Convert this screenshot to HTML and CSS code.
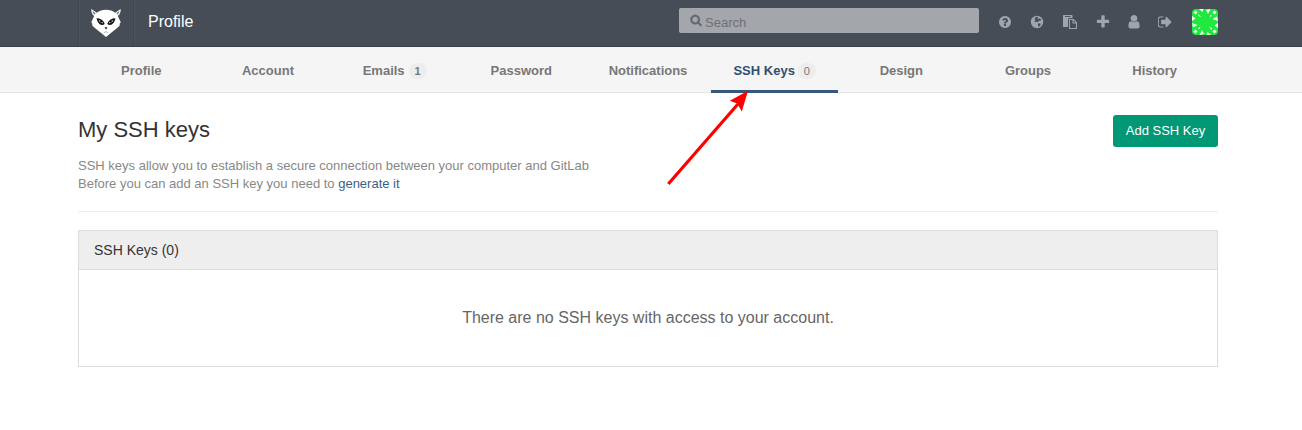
FILE: index.html
```html
<!DOCTYPE html>
<html lang="en">
<head>
<meta charset="utf-8">
<title>SSH Keys · Profile</title>
<link rel="stylesheet" href="styles.css">
</head>
<body>
<header class="topbar">
  <div class="container topbar-inner">
    <a class="logo">
      <svg width="30" height="29" viewBox="0 0 30 29">
        <path fill="#fff" d="M.3 0L5.800 3.800Q9.500 .8 15 .8T24.200 3.800L29.700 0Q30 4.500 26.800 7L29.800 13.200L28.600 14.800L28.800 16.500L25.500 19.500L20.500 23.500L15 28L9.500 23.500L4.500 19.500L1.200 16.500L1.400 14.800L.2 13.200L3.200 7Q0 4.500 .3 0z"/>
        <path fill="#7d828b" d="M1.500 1.800L4.700 4.300L3.200 5.800Q1.700 4.200 1.500 1.800zM28.500 1.800L25.300 4.300L26.800 5.800Q28.300 4.200 28.500 1.800z"/>
        <path fill="#111" d="M5.500 9.200Q11 9.200 13.600 14.200Q13.800 16.200 11 16Q7 15.500 5.500 9.200zM24.500 9.200Q19 9.200 16.400 14.200Q16.200 16.200 19 16Q23 15.500 24.500 9.200zM13.500 18.600Q15 17.700 16.500 18.600L15 20.500z"/>
        <path fill="#fff" d="M7.700 11.200Q10.600 11.200 12.200 14Q9 14.800 7.700 11.200zM22.300 11.200Q19.400 11.200 17.800 14Q21 14.800 22.300 11.200z"/>
        <circle cx="10.200" cy="12.700" r="1.100" fill="#111"/><circle cx="19.800" cy="12.700" r="1.100" fill="#111"/>
        <path fill="none" stroke="#777" stroke-width=".6" d="M13.200 23.800L15 22.500L16.800 23.800"/>
      </svg>
    </a>
    <h1 class="title">Profile</h1>
    <div class="search">
      <svg class="search-icon" viewBox="0 0 1792 1792"><path d="M1216 832q0-185-131.500-316.500t-316.500-131.500-316.500 131.500-131.500 316.500 131.500 316.500 316.500 131.500 316.500-131.500 131.500-316.500zm512 832q0 52-38 90t-90 38q-54 0-90-38l-343-342q-179 124-399 124-143 0-273.500-55.500t-225-150-150-225-55.500-273.500 55.500-273.500 150-225 225-150 273.500-55.500 273.500 55.500 225 150 150 225 55.500 273.500q0 220-124 399l343 343q37 37 37 90z"/></svg>
      <span>Search</span>
    </div>
    <div class="actions">
      <svg class="icon" viewBox="0 0 1792 1792"><path d="M1024 1376v-192q0-14-9-23t-23-9h-192q-14 0-23 9t-9 23v192q0 14 9 23t23 9h192q14 0 23-9t9-23zm256-672q0-88-55.500-163t-138.500-116-170-41q-243 0-371 213-15 24 8 42l132 100q7 6 19 6 16 0 25-12 53-68 86-92 34-24 86-24 48 0 85.500 26t37.500 59q0 38-20 61t-68 45q-63 28-115.500 86.500t-52.500 125.500v36q0 14 9 23t23 9h192q14 0 23-9t9-23q0-19 21.500-49.500t54.500-49.500q32-18 49-28.500t46-35 44.500-48 28-60.500 12.500-81zm384 192q0 209-103 385.500t-279.500 279.500-385.500 103-385.500-103-279.500-279.500-103-385.500 103-385.500 279.500-279.500 385.500-103 385.500 103 279.500 279.500 103 385.500z"/></svg>
      <svg class="icon" viewBox="0 0 14 14"><circle cx="7" cy="7" r="6.200"/><path class="cut" d="M5.500 2.200L7.300 1.800L8.300 2.600L7.300 3.400L8 4.300L9.500 3.200L11.300 4.600L10.500 5.800L9 5.700L7.600 7.200L6.600 6.500L5.400 7.200L4.300 6.200L5.600 5.200L4.700 3.900zM8.300 8.200L10.800 8.800L10 10.800L8.600 11.800L7.900 10z"/></svg>
      <svg class="icon icon-wide" viewBox="0 0 14 14"><path d="M.6 0H8.800Q9.500 0 9.500 .7V3H6.800Q5 3 5 4.600V12H.6Q0 12 0 11.400V.6Q0 0 .6 0z"/><path class="cut" d="M2 1H7.600V1.900H2z"/><path fill-rule="evenodd" d="M6.500 4H10.700L14 7.300V13.300Q14 14 13.300 14H6.600Q6 14 6 13.400V4.500Q6 4 6.500 4zM7 5V13H13V8.500H10Q9.500 8.500 9.500 8V5zM10.500 5.300V7.500H12.700z"/></svg>
      <svg class="icon" viewBox="96 96 1600 1600"><path d="M1600 736v192q0 40-28 68t-68 28h-416v416q0 40-28 68t-68 28h-192q-40 0-68-28t-28-68v-416h-416q-40 0-68-28t-28-68v-192q0-40 28-68t68-28h416v-416q0-40 28-68t68-28h192q40 0 68 28t28 68v416h416q40 0 68 28t28 68z"/></svg>
      <svg class="icon" viewBox="96 128 1600 1600"><path d="M1536 1399q0 109-62.500 187t-150.500 78h-854q-88 0-150.500-78t-62.500-187q0-85 8.500-160.500t31.500-152 58.500-131 94-89 134.500-34.500q131 128 313 128t313-128q76 0 134.500 34.500t94 89 58.500 131 31.500 152 8.500 160.500zm-256-887q0 159-112.500 271.500t-271.500 112.500-271.500-112.500-112.500-271.500 112.500-271.500 271.500-112.500 271.500 112.500 112.500 271.500z"/></svg>
      <svg class="icon" viewBox="96 96 1600 1600"><path d="M704 1440q0 4 1 20t.5 26.500-3 23.500-10 19.500-20.500 6.500h-320q-119 0-203.500-84.500t-84.500-203.500v-704q0-119 84.500-203.500t203.500-84.500h320q13 0 22.500 9.500t9.500 22.500q0 4 1 20t.5 26.500-3 23.500-10 19.500-20.500 6.500h-320q-66 0-113 47t-47 113v704q0 66 47 113t113 47h312l11.500 1 11.500 3 8 5.500 7 9 2 13.500zm928-544q0 26-19 45l-544 544q-19 19-45 19t-45-19-19-45v-288h-448q-26 0-45-19t-19-45v-384q0-26 19-45t45-19h448v-288q0-26 19-45t45-19 45 19l544 544q19 19 19 45z"/></svg>
      <svg class="avatar" viewBox="0 0 26 26"><path fill="#1fe93f" d="M0 0H26V26H0z"/><path fill="#f4fff2" d="M1.500 3.500L3.500 1.500L5.500 3.500L3.500 5.500zM20.500 3.500L22.500 1.500L24.500 3.500L22.500 5.500zM1.500 22.500L3.500 20.500L5.500 22.500L3.500 24.500zM20.500 22.500L22.500 20.500L24.500 22.500L22.500 24.500zM7 0H11.500L10.500 3zM14 1L18.500 0L16 5zM0 7L3.500 9.500L0 12zM0 14L5.500 16L1 18.500zM26 19L22.500 16.500L26 14zM26 12L20.500 10L25 7.500zM19 26H14.500L15.500 23zM12 25L7.500 26L10 21zM6 5L9.500 8L6.500 7zM20 6L17.500 9L18.500 6zM6 20L8.500 17L7.500 20zM20 21L17 18L20 19z"/></svg>
    </div>
  </div>
</header>
<nav class="subnav">
  <div class="container tabs">
    <a class="tab">Profile</a>
    <a class="tab">Account</a>
    <a class="tab">Emails <span class="count">1</span></a>
    <a class="tab">Password</a>
    <a class="tab">Notifications</a>
    <a class="tab active">SSH Keys <span class="count">0</span></a>
    <a class="tab">Design</a>
    <a class="tab">Groups</a>
    <a class="tab">History</a>
  </div>
</nav>
<main class="container content">
  <div class="heading">
    <h2>My SSH keys</h2>
    <a class="button">Add SSH Key</a>
  </div>
  <p class="intro">SSH keys allow you to establish a secure connection between your computer and GitLab<br>Before you can add an SSH key you need to <a class="link">generate it</a></p>
  <section class="panel">
    <div class="panel-head">SSH Keys (0)</div>
    <div class="panel-body">There are no SSH keys with access to your account.</div>
  </section>
</main>
<svg class="arrow" width="86" height="98" viewBox="0 0 86 98"><path d="M4.300 94L74 14" stroke="#f00" stroke-width="3.200"/><path fill="#f00" d="M84 .7L65.800 10.800L73.200 13.600L77.800 21.600z"/></svg>
</body>
</html>
```
FILE: styles.css
```css
* { box-sizing: border-box; }
body { margin: 0; background: #fff; color: #333; font-family: "Liberation Sans", Arial, sans-serif; font-size: 13px; line-height: 18px; }
.container { width: 1140px; margin-left: 78px; }
.topbar { height: 47px; background: #474d57; border-bottom: 1px solid #3b404b; }
.topbar-inner { display: flex; height: 46px; align-items: center; }
.logo { width: 56px; height: 46px; padding: 9px 0 0 12px; border-left: 1px solid #414751; border-right: 1px solid #414751; box-shadow: inset 1px 0 #4e545e, 1px 0 #4e545e; margin-right: 14px; }
.logo svg { display: block; }
.title { margin: 0; width: 531px; color: #fff; font-size: 16px; font-weight: 400; line-height: 20px; padding-bottom: 3px; }
.search { display: flex; width: 300px; height: 25px; margin-top: -5px; padding: 4px 11px 0; background: #a3a6ab; border-radius: 2px; color: #6c7077; line-height: 20px; }
.search span { padding-top: 1px; }
.search-icon { width: 12px; height: 12px; margin: 2px 3px 0 0; fill: #62666e; stroke: #62666e; stroke-width: 60px; overflow: visible; }
.actions { display: flex; align-items: center; flex: 1; padding-left: 19px; margin-top: -2px; }
.icon { width: 14px; height: 14px; margin-right: 18px; fill: #a0a4ad; }
.icon:nth-child(2), .icon-wide { margin-right: 19px; }
.icon:nth-child(4), .icon:nth-child(5) { margin-right: 17px; }
.icon:nth-child(6) { margin-right: 0; }
.cut { fill: #474d57; }
.avatar { width: 26px; height: 26px; margin-left: auto; border-radius: 4px; }
.subnav { height: 46px; background: #f5f5f5; border-bottom: 1px solid #e5e5e5; }
.tabs { display: grid; grid-template-columns: repeat(9, 1fr); }
.tab { display: flex; justify-content: center; align-items: center; height: 46px; padding-top: 5px; border-bottom: 3px solid transparent; color: #777; font-weight: 700; }
.tab.active { color: #31506f; border-color: #37587d; }
.count { min-width: 18px; height: 16px; margin-left: 4px; padding: 0 5px; border-radius: 8px; background: #ededed; color: #777; font-size: 11px; line-height: 17px; text-align: center; }
.active .count { font-weight: 400; margin-left: 3px; }
.content { padding-top: 22px; }
.heading { display: flex; justify-content: space-between; height: 42px; }
h2 { margin: 0; color: #333; font-size: 22px; font-weight: 400; line-height: 30px; }
.button { width: 105px; height: 32px; border-radius: 3px; background: #019875; color: #fff; font-size: 13px; line-height: 31px; text-align: center; }
.intro { margin: 0 0 18px; height: 55px; border-bottom: 1px solid #eee; color: #888; }
.link { color: #3b5f85; }
.panel { border: 1px solid #ddd; box-shadow: 0 1px 1px rgba(0,0,0,.05); height: 137px; }
.panel-head { height: 39px; padding: 0 15px; border-bottom: 1px solid #ddd; background: #eee; font-size: 14px; line-height: 38px; }
.panel-body { height: 96px; color: #666; font-size: 16px; line-height: 96px; text-align: center; }
.arrow { position: absolute; left: 664px; top: 90px; }
```
